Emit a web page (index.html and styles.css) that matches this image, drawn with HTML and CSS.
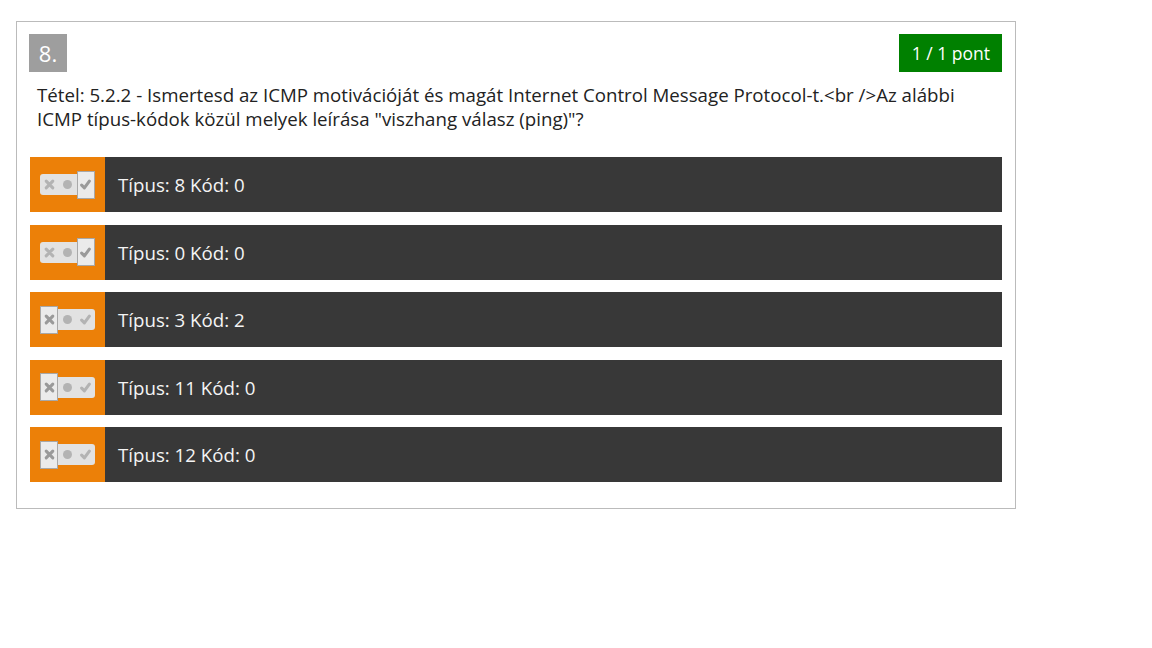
FILE: index.html
```html
<!DOCTYPE html>
<html>
<head>
<meta charset="utf-8">
<link rel="stylesheet" href="styles.css">
</head>
<body>
<div class="card">
  <div class="head">
    <div class="num">8.</div>
    <div class="score">1 / 1 pont</div>
  </div>
  <div class="question">Tétel: 5.2.2 - Ismertesd az ICMP motivációját és magát Internet Control Message Protocol-t.&lt;br /&gt;Az alábbi ICMP típus-kódok közül melyek leírása "viszhang válasz (ping)"?</div>
  <div class="answers">
    <div class="answer">
      <div class="sel"><div class="toggle"><span class="cell"><svg class="ic" viewBox="0 0 10 10"><path d="M2 2L8 8M8 2L2 8"/></svg></span><span class="cell"><i class="dot"></i></span><span class="cell on"><svg class="ic" viewBox="0 0 10 10"><path d="M1.5 5.5L4 8L8.5 2"/></svg></span></div></div>
      <div class="label">Típus: 8 Kód: 0</div>
    </div>
    <div class="answer">
      <div class="sel"><div class="toggle"><span class="cell"><svg class="ic" viewBox="0 0 10 10"><path d="M2 2L8 8M8 2L2 8"/></svg></span><span class="cell"><i class="dot"></i></span><span class="cell on"><svg class="ic" viewBox="0 0 10 10"><path d="M1.5 5.5L4 8L8.5 2"/></svg></span></div></div>
      <div class="label">Típus: 0 Kód: 0</div>
    </div>
    <div class="answer">
      <div class="sel"><div class="toggle"><span class="cell on"><svg class="ic" viewBox="0 0 10 10"><path d="M2 2L8 8M8 2L2 8"/></svg></span><span class="cell"><i class="dot"></i></span><span class="cell"><svg class="ic" viewBox="0 0 10 10"><path d="M1.5 5.5L4 8L8.5 2"/></svg></span></div></div>
      <div class="label">Típus: 3 Kód: 2</div>
    </div>
    <div class="answer">
      <div class="sel"><div class="toggle"><span class="cell on"><svg class="ic" viewBox="0 0 10 10"><path d="M2 2L8 8M8 2L2 8"/></svg></span><span class="cell"><i class="dot"></i></span><span class="cell"><svg class="ic" viewBox="0 0 10 10"><path d="M1.5 5.5L4 8L8.5 2"/></svg></span></div></div>
      <div class="label">Típus: 11 Kód: 0</div>
    </div>
    <div class="answer">
      <div class="sel"><div class="toggle"><span class="cell on"><svg class="ic" viewBox="0 0 10 10"><path d="M2 2L8 8M8 2L2 8"/></svg></span><span class="cell"><i class="dot"></i></span><span class="cell"><svg class="ic" viewBox="0 0 10 10"><path d="M1.5 5.5L4 8L8.5 2"/></svg></span></div></div>
      <div class="label">Típus: 12 Kód: 0</div>
    </div>
  </div>
</div>
</body>
</html>
```
FILE: styles.css
```css
* { box-sizing: border-box; }
body {
  margin: 0;
  padding: 21px 0 0 16px;
  font-family: "Open Sans", "Liberation Sans", sans-serif;
  background: #fff;
}
.card {
  width: 1000px;
  border: 1px solid #bbbbbb;
  padding: 12px 13px 26px 13px;
}
.head {
  display: flex;
  justify-content: space-between;
  align-items: flex-start;
}
.num {
  margin-left: -1px;
  width: 38px;
  height: 38px;
  background: #9e9e9e;
  color: #fff;
  font-size: 22px;
  line-height: 38px;
  text-align: center;
}
.score {
  height: 38px;
  padding: 0 12px 0 13px;
  background: #008000;
  color: #fff;
  font-size: 17.5px;
  line-height: 38px;
}
.question {
  padding: 11px 40px 0 7px;
  font-size: 18.7px;
  line-height: 24px;
  color: #222;
}
.answers {
  margin-top: 26px;
  display: flex;
  flex-direction: column;
  gap: 12.5px;
}
.answer {
  display: flex;
  height: 55px;
  background: #383838;
}
.sel {
  width: 75px;
  background: #ec8008;
  display: flex;
  align-items: center;
  padding-left: 10px;
}
.toggle {
  display: flex;
  align-items: center;
  width: 55px;
  height: 21px;
  background: #e2e2e2;
  border-radius: 3px;
}
.cell {
  width: 18.3px;
  height: 21px;
  display: flex;
  align-items: center;
  justify-content: center;
}
.cell.on {
  height: 28px;
  background: #ebebeb;
  border: 1.5px solid #a8a8a8;
}
.ic {
  width: 11px;
  height: 11px;
  fill: none;
  stroke: #b3b3b3;
  stroke-width: 2.8;
  stroke-linecap: round;
  stroke-linejoin: round;
}
.cell.on .ic { stroke: #9a9a9a; }
.dot {
  width: 9px;
  height: 9px;
  border-radius: 50%;
  background: #b3b3b3;
}
.label {
  padding-left: 13px;
  color: #f4f4f4;
  font-size: 18.7px;
  line-height: 55px;
}
```
